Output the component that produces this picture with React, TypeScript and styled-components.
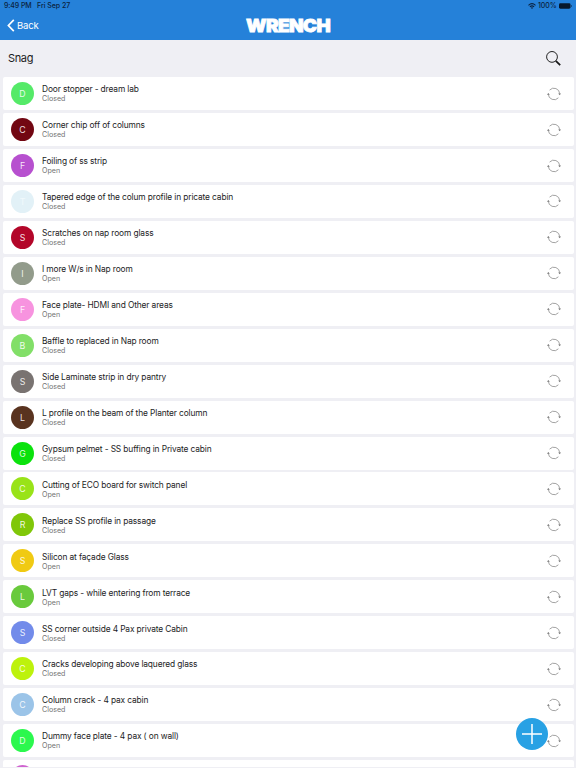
import React from 'react';
import styled, { createGlobalStyle } from 'styled-components';

const GlobalStyle = createGlobalStyle`
  * { box-sizing: border-box; }
  body { margin: 0; overflow: hidden; background: #efeff4; }
`;

const Screen = styled.div`
  width: 576px;
  height: 768px;
  overflow: hidden;
  position: relative;
  display: flex;
  flex-direction: column;
  background: #efeff4;
  font-family: Inter, 'Liberation Sans', sans-serif;
  color: #1c1c1e;
`;

const Header = styled.header`
  flex: none;
  height: 40px;
  background: #2581d9;
`;

const StatusBar = styled.div`
  height: 12px;
  display: flex;
  align-items: center;
  justify-content: space-between;
  padding: 0 4px 0 4px;
  font-size: 7px;
  font-weight: 500;
  line-height: 12px;
  color: #0b2340;
`;

const StatusGroup = styled.div<{ $gap: number }>`
  display: flex;
  align-items: center;
  gap: ${(p) => p.$gap}px;
  white-space: nowrap;
`;

const StatusLabel = styled.span<{ $tracking?: number }>`
  letter-spacing: ${(p) => p.$tracking ?? 0}px;
`;

const NavBar = styled.nav`
  height: 28px;
  display: grid;
  grid-template-columns: 1fr auto 1fr;
  align-items: center;
`;

const BackButton = styled.button`
  display: flex;
  align-items: center;
  gap: 2px;
  height: 28px;
  padding: 0 0 1px 7px;
  border: 0;
  background: none;
  color: #fff;
  font: 400 9.5px Inter, sans-serif;
  letter-spacing: -0.2px;
`;

const Logo = styled.svg`
  display: block;
  width: 86px;
  height: 26px;
`;

const TitleBar = styled.div`
  flex: none;
  height: 37px;
  display: flex;
  align-items: center;
  justify-content: space-between;
  padding: 0 15px 1px 8px;
`;

const Title = styled.h1`
  margin: 0;
  font-size: 11px;
  font-weight: 400;
  line-height: 16px;
  letter-spacing: -0.35px;
`;

const List = styled.main`
  flex: none;
  height: 690px;
  overflow: hidden;
  display: flex;
  flex-direction: column;
  gap: 2.945px;
  padding: 0.15px 2px 0 3px;
`;

const Card = styled.article`
  flex: none;
  height: 33px;
  display: flex;
  align-items: center;
  padding: 0 13px 0 8px;
  border-radius: 2px;
  background: #fff;
`;

const Avatar = styled.div<{ $color: string; $ink?: string }>`
  flex: none;
  width: 23px;
  height: 23px;
  display: flex;
  align-items: center;
  justify-content: center;
  border-radius: 50%;
  background: ${(p) => p.$color};
  color: ${(p) => p.$ink ?? 'rgba(255, 255, 255, 0.88)'};
  font-size: 8.8px;
`;

const Details = styled.div`
  flex: 1;
  margin-left: 8px;
  padding-top: 0.6px;
  white-space: nowrap;
`;

const Name = styled.div`
  font-size: 8.4px;
  line-height: 10px;
  letter-spacing: -0.13px;
`;

const Status = styled.div`
  font-size: 7.1px;
  line-height: 9px;
  color: #727272;
`;

const AddButton = styled.button`
  position: absolute;
  left: 515.5px;
  top: 718px;
  width: 32px;
  height: 32px;
  padding: 0;
  border: 0;
  border-radius: 50%;
  background: #28a1e4;
`;

const snags: { name: string; status: string; color: string; ink?: string }[] = [
  { name: 'Door stopper - dream lab', status: 'Closed', color: '#55ea68' },
  { name: 'Corner chip off of columns', status: 'Closed', color: '#720712' },
  { name: 'Foiling of ss strip', status: 'Open', color: '#b750cf' },
  { name: 'Tapered edge of the colum profile in pricate cabin', status: 'Closed', color: '#e2f1f7', ink: '#f1f9fc' },
  { name: 'Scratches on nap room glass', status: 'Closed', color: '#b30629' },
  { name: 'I more W/s in Nap room', status: 'Open', color: '#929b8b' },
  { name: 'Face plate- HDMI and Other areas', status: 'Open', color: '#f793df' },
  { name: 'Baffle to replaced in Nap room', status: 'Closed', color: '#82df68' },
  { name: 'Side Laminate strip in dry pantry', status: 'Closed', color: '#797371' },
  { name: 'L profile on the beam of the Planter column', status: 'Closed', color: '#59331f' },
  { name: 'Gypsum pelmet - SS buffing in Private cabin', status: 'Closed', color: '#0be20d' },
  { name: 'Cutting of ECO board for switch panel', status: 'Open', color: '#99e318' },
  { name: 'Replace SS profile in passage', status: 'Closed', color: '#80c709' },
  { name: 'Silicon at façade Glass', status: 'Open', color: '#f0ca13' },
  { name: 'LVT gaps - while entering from terrace', status: 'Open', color: '#69ca3c' },
  { name: 'SS corner outside 4 Pax private Cabin', status: 'Closed', color: '#728bea' },
  { name: 'Cracks developing above laquered glass', status: 'Closed', color: '#bdf20c' },
  { name: 'Column crack - 4 pax cabin', status: 'Closed', color: '#9bc4e8' },
  { name: 'Dummy face plate - 4 pax ( on wall)', status: 'Open', color: '#2bf84e' },
];

const SyncIcon = () => (
  <svg width="14" height="14" viewBox="0 0 14 14" fill="none" stroke="#8c8c8c" strokeWidth="0.8">
    <path d="M2.6 3.1A5.8 5.8 0 0 1 12.7 6.8M11.4 10.8A5.8 5.8 0 0 1 1.3 7.2" />
    <path d="M0 7.8L1.3 6L2.8 7.8ZM11.2 6.4H14L12.7 8.2Z" fill="#777" stroke="none" />
  </svg>
);

const SearchIcon = () => (
  <svg width="15" height="15" viewBox="0 0 15 15" fill="none" stroke="#171717">
    <circle cx="6" cy="5.9" r="5.4" strokeWidth="0.95" />
    <path d="M9.8 9.8L14.2 14.2" strokeWidth="1.7" />
  </svg>
);

const WifiIcon = () => (
  <svg width="8" height="6" viewBox="0 0 8 6" fill="none" stroke="#0b2340" strokeWidth="1.1">
    <path d="M0.5 2.3Q4 -0.9 7.5 2.3M1.9 3.8Q4 1.9 6.1 3.8" />
    <path d="M2.9 4.7Q4 3.9 5.1 4.7L4 5.9Z" fill="#0b2340" stroke="none" />
  </svg>
);

const BatteryIcon = () => (
  <svg width="13" height="6" viewBox="0 0 13 6">
    <rect x="0" y="0.3" width="11.5" height="5.4" rx="1.4" fill="#07182c" />
    <path d="M12 2V4Q12.8 3.7 12.8 3Q12.8 2.3 12 2Z" fill="#0b2340" />
  </svg>
);

export default function App() {
  return (
    <Screen>
      <GlobalStyle />
      <Header>
        <StatusBar>
          <StatusGroup $gap={5.5}>
            <StatusLabel $tracking={-0.1}>9:49 PM</StatusLabel>
            <StatusLabel $tracking={-0.05}>Fri Sep 27</StatusLabel>
          </StatusGroup>
          <StatusGroup $gap={2.5}>
            <WifiIcon />
            <StatusLabel $tracking={-0.1}>100%</StatusLabel>
            <BatteryIcon />
          </StatusGroup>
        </StatusBar>
        <NavBar>
          <BackButton>
            <svg width="8" height="13" viewBox="0 0 8 13" fill="none" stroke="#fff" strokeWidth="1.7">
              <path d="M6.8 0.9L1.4 6.5L6.8 12.1" />
            </svg>
            Back
          </BackButton>
          <Logo viewBox="0 0 86 26" role="img" aria-label="WRENCH">
            <text
              x="1"
              y="19.4"
              textLength="84"
              lengthAdjust="spacingAndGlyphs"
              fontFamily="Inter, sans-serif"
              fontWeight="900"
              fontSize="18"
              letterSpacing="-0.6"
              fill="#fff"
              stroke="#fff"
              strokeWidth="0.8"
            >
              WRENCH
            </text>
          </Logo>
          <span />
        </NavBar>
      </Header>
      <TitleBar>
        <Title>Snag</Title>
        <SearchIcon />
      </TitleBar>
      <List>
        {snags.map((snag) => (
          <Card key={snag.name}>
            <Avatar $color={snag.color} $ink={snag.ink}>
              {snag.name[0]}
            </Avatar>
            <Details>
              <Name>{snag.name}</Name>
              <Status>{snag.status}</Status>
            </Details>
            <SyncIcon />
          </Card>
        ))}
        <Card>
          <Avatar $color="#cf63cf" />
        </Card>
      </List>
      <AddButton aria-label="Add snag">
        <svg width="32" height="32" viewBox="0 0 32 32" stroke="#fff" strokeWidth="1.5">
          <path d="M16 6V26M6 16H26" />
        </svg>
      </AddButton>
    </Screen>
  );
}
